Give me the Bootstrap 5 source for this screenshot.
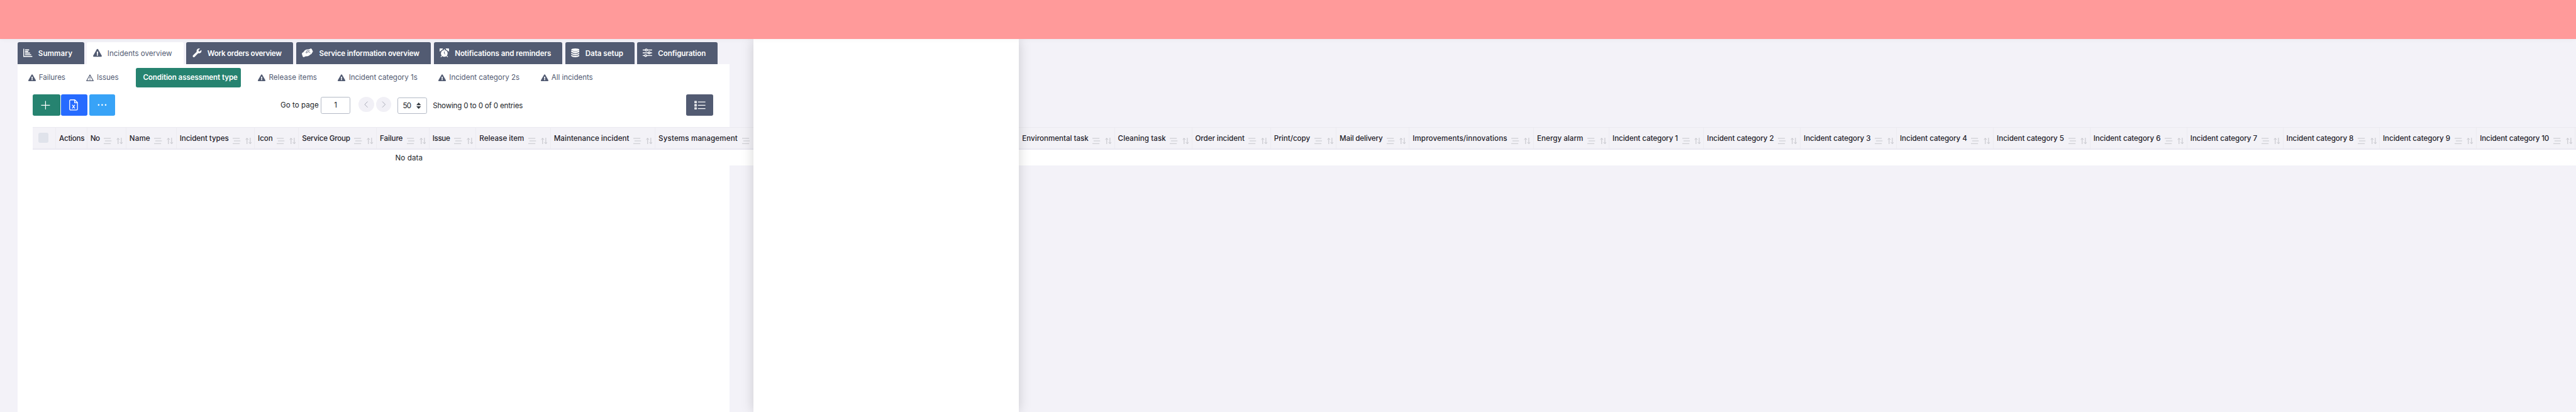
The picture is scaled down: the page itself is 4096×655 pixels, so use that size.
<!DOCTYPE html>
<html lang="en">
<head>
<meta charset="utf-8">
<title>Incidents overview</title>
<link href="https://cdn.jsdelivr.net/npm/bootstrap@5.3.0/dist/css/bootstrap.min.css" rel="stylesheet">
<style>
/* 1rem = 10 layout units */
html{font-size:9.2838px;overflow:hidden;height:100%}
body{font-family:Inter,"Noto Sans",sans-serif;font-size:1.25rem;line-height:1.8rem;color:#212529;background:#f3f2f8;height:100%;overflow:hidden;position:relative}
svg{display:block;flex:none}
.fit{display:inline-block;white-space:nowrap;flex:none}
.topbar{height:6.7rem;background:#ff9a9a;position:relative;z-index:5;box-shadow:0 0 .8rem rgba(0,0,0,.05)}
.tabs{padding:.5rem 0 0 3rem;height:4.3rem}
.tab{height:3.8rem;background:#525b72;color:#fff;font-weight:600;border-radius:.3rem .3rem 0 0;padding:.2rem 0 0 1rem;flex:none;width:calc(var(--w)*.1rem);margin-right:calc(var(--g,5)*.1rem)}
.tab svg{width:calc(var(--i)*.1rem);height:1.5rem;margin:-.3rem 1rem 0 0}
.tab.on{background:#fff;color:#525b72;font-weight:400}
.panel{margin-left:3rem;width:122rem;height:calc(100% - 11rem);background:#fff}
.subs{height:4.6rem;color:#525b72;position:relative;padding-left:1.8rem}
.sub{flex:none;width:calc(var(--w)*.1rem)}
.sub svg{width:1.3rem;height:1.2rem;margin-right:.55rem}
.pill{background:#268370;color:#fff;font-weight:600;width:18.05rem;height:3.4rem;border-radius:.3rem;padding-left:1.25rem;margin-right:2.9rem;flex:none}
.tools{height:6.2rem;padding:.6rem 0 0 2.6rem}
.sq{height:3.6rem;border-radius:.3rem;color:#fff;flex:none;width:calc(var(--w)*.1rem);border:0;padding:0}
.field{border:1px solid #b4bac6;border-radius:.3rem;height:2.85rem;background:#fff;flex:none}
.circ{width:2.6rem;height:2.6rem;border-radius:50%;background:#f1f0f6;flex:none}
.heads{margin-left:2.6rem;width:435.6rem;height:3.87rem;background:#f3f2f7;border-top:1px solid #ebeaf0;border-bottom:2px solid #e9e8f1}
.hd{flex:none;width:calc(var(--w)*.1rem);border-right:1px solid #ecebf1;padding:.1rem 0 0 .53rem;font-weight:450;color:#1e2129}
.hd svg.ln{width:1.35rem;height:1.1rem;margin:.9rem .77rem 0 .72rem}
.hd svg.so{width:1.15rem;height:1.1rem;margin-top:.8rem}
.chk{width:1.8rem;height:1.8rem;border-radius:.3rem;background:#e0e3eb;margin:-.3rem 0 0 .4rem}
.empty{margin-left:2.6rem;width:435.6rem;height:2.65rem;background:#fff;padding:.15rem 0 0 62.1rem}
.drawer{position:absolute;left:129rem;top:6.7rem;width:45.5rem;bottom:0;background:#fff;box-shadow:0 0 2rem rgba(0,0,0,.17);z-index:3}
</style>
</head>
<body>
<svg width="0" height="0" class="position-absolute">
<symbol id="warn" viewBox="0 0 576 512"><path fill="currentColor" d="M569.517 440.013C587.975 472.007 564.806 512 527.94 512H48.054c-36.937 0-59.999-40.055-41.577-71.987L246.423 23.985c18.467-32.009 64.72-31.951 83.154 0l239.94 416.028zM288 354c-25.405 0-46 20.595-46 46s20.595 46 46 46 46-20.595 46-46-20.595-46-46-46zm-43.673-165.346l7.418 136c.347 6.364 5.609 11.346 11.982 11.346h48.546c6.373 0 11.635-4.982 11.982-11.346l7.418-136c.375-6.874-5.098-12.654-11.982-12.654h-63.383c-6.884 0-12.356 5.78-11.981 12.654z"/></symbol>
<symbol id="warno" viewBox="0 0 26 24"><path d="M13 2 24.500 22.500H1.500Z" fill="none" stroke="currentColor" stroke-width="2.4" stroke-linejoin="round"/><path d="M13 9v6M13 17.2v2.6" stroke="currentColor" stroke-width="2.6"/></symbol>
<symbol id="lines" viewBox="0 0 13.5 11"><path d="M0 1h12M2 5.5h11.5M0 10h12" stroke="#c6c6cb" stroke-width="1.1" fill="none"/></symbol>
<symbol id="sort" viewBox="0 0 11.5 11"><path d="M3 11V1M.6 3.2 3 .8 5.4 3.2M8.5 0v10M6.1 7.8l2.4 2.4 2.4-2.4" stroke="#bdbdc3" stroke-width="1" fill="none"/></symbol>
</svg>

<header class="topbar"></header>

<nav class="tabs d-flex">
  <div class="tab d-flex align-items-center" style="--w:114;--i:15.5"><svg viewBox="0 0 31 28"><path d="M1.5 0v26.5H31" fill="none" stroke="#fff" stroke-width="3"/><path d="M6 4h14M6 9.5h11M6 15h17M6 20.5h21" stroke="#fff" stroke-width="3.6"/></svg><span class="fit" data-w="58.5">Summary</span></div>
  <div class="tab on d-flex align-items-center" style="--w:166;--i:15;--g:4.3"><svg><use href="#warn"/></svg><span class="fit" data-w="110.5">Incidents overview</span></div>
  <div class="tab d-flex align-items-center" style="--w:183;--i:16"><svg viewBox="0 0 512 512"><path fill="#fff" d="M507.73 109.1c-2.24-9.03-13.54-12.09-20.12-5.51l-74.36 74.36-67.88-11.31-11.31-67.88 74.36-74.36c6.62-6.62 3.43-17.9-5.66-20.16-47.38-11.74-99.55.91-136.58 37.93-39.64 39.64-50.55 97.1-34.05 147.2L18.74 402.76c-24.99 24.99-24.99 65.51 0 90.5 24.99 24.99 65.51 24.99 90.5 0l213.21-213.21c50.12 16.71 107.47 5.68 147.37-34.22 37.07-37.07 49.7-89.32 37.91-136.73z"/></svg><span class="fit" data-w="127">Work orders overview</span></div>
  <div class="tab d-flex align-items-center" style="--w:230.700;--i:19.5"><svg viewBox="0 0 39 30"><path fill="#fff" d="M1 15 5 13Q9 6 15 4L24 3 31 0 34 2 38 11 35 15Q34 20 29 21L25 24Q20 28 13 27L6 30 3 28 0 19Z"/><path d="M27 8H17L14 15Q18 17 20 12H25L29 16" stroke="#525b72" stroke-width="1.7" fill="none"/></svg><span class="fit" data-w="171.5">Service information overview</span></div>
  <div class="tab d-flex align-items-center" style="--w:220;--i:16"><svg viewBox="0 0 32 30"><circle cx="16" cy="17" r="11.5" fill="#fff"/><path d="M1 9A5 5 0 0 1 10 2ZM31 9A5 5 0 0 0 22 2ZM16 2v5M8 25l-4 4.500M24 25l4 4.500" fill="#fff" stroke="#fff" stroke-width="2.500"/><path d="M16 10.500V17l3.500 3" stroke="#525b72" stroke-width="2" fill="none"/></svg><span class="fit" data-w="165">Notifications and reminders</span></div>
  <div class="tab d-flex align-items-center" style="--w:119;--i:14.5;--g:4"><svg viewBox="0 0 28 30"><ellipse cx="14" cy="4.500" rx="14" ry="4.500" fill="#fff"/><path fill="#fff" d="M0 7Q14 14 28 7V12Q14 20 0 12ZM0 15Q14 22 28 15V19Q14 27 0 19ZM0 22Q14 29 28 22V26Q24 30 14 30T0 26Z"/></svg><span class="fit" data-w="65">Data setup</span></div>
  <div class="tab d-flex align-items-center" style="--w:138;--i:16"><svg viewBox="0 0 32 30"><path d="M0 5.500h32M0 15h32M0 24.500h32" stroke="#fff" stroke-width="3.200"/><g fill="#525b72" stroke="#fff" stroke-width="3"><circle cx="12" cy="5.500" r="3.300"/><circle cx="22" cy="15" r="3.300"/><circle cx="10" cy="24.500" r="3.300"/></g></svg><span class="fit" data-w="82">Configuration</span></div>
</nav>

<main class="panel">
  <div class="subs d-flex align-items-center">
    <div class="sub d-flex align-items-center" style="--w:99.5"><svg><use href="#warn"/></svg><span class="fit" data-w="45.5">Failures</span></div>
    <div class="sub d-flex align-items-center" style="--w:85"><svg><use href="#warno"/></svg><span class="fit" data-w="37">Issues</span></div>
    <div class="pill d-flex align-items-center"><span class="fit" data-w="162">Condition assessment type</span></div>
    <div class="sub d-flex align-items-center" style="--w:137"><svg><use href="#warn"/></svg><span class="fit" data-w="82.500">Release items</span></div>
    <div class="sub d-flex align-items-center" style="--w:172"><svg><use href="#warn"/></svg><span class="fit" data-w="117.500">Incident category 1s</span></div>
    <div class="sub d-flex align-items-center" style="--w:175"><svg><use href="#warn"/></svg><span class="fit" data-w="120.500">Incident category 2s</span></div>
    <div class="sub d-flex align-items-center" style="--w:100"><svg><use href="#warn"/></svg><span class="fit" data-w="71">All incidents</span></div>
  </div>

  <div class="tools d-flex align-items-start">
    <button class="sq d-flex align-items-center justify-content-center" style="--w:47;background:#268370;margin-right:.2rem"><svg style="width:1.6rem;height:1.6rem;margin-right:.3rem" viewBox="0 0 16 16"><path d="M8 .5v15M.5 8h15" stroke="#fff" stroke-width="1.300"/></svg></button>
    <button class="sq d-flex align-items-center justify-content-center" style="--w:45;background:#266bff;margin-right:.3rem"><svg style="width:1.5rem;height:1.9rem;margin-right:.2rem" viewBox="0 0 15 19"><path d="M9.500 .8H2.500A1.700 1.700 0 0 0 .8 2.500V16.500A1.700 1.700 0 0 0 2.500 18.200H12.500A1.700 1.700 0 0 0 14.200 16.500V5.500ZM9.300 .8V5.700H14.200M5.200 9.300 9.800 15.500M9.800 9.300 5.200 15.500" fill="none" stroke="#fff" stroke-width="1.400"/></svg></button>
    <button class="sq d-flex align-items-center justify-content-center" style="--w:44;background:#38a3f7"><svg style="width:1.6rem;height:.4rem" viewBox="0 0 16 4"><g fill="#fff"><circle cx="2" cy="2" r="1.400"/><circle cx="8" cy="2" r="1.400"/><circle cx="14" cy="2" r="1.400"/></g></svg></button>
    <div class="d-flex align-items-center" style="height:3.7rem;margin-left:28.350rem">
      <span class="fit" data-w="65.500">Go to page</span>
      <div class="field d-flex align-items-center justify-content-center" style="width:5.05rem;margin-left:.35rem">1</div>
      <div class="circ d-flex align-items-center justify-content-center" style="margin:-.3rem .4rem 0 1.450rem"><svg style="width:.7rem;height:1.1rem" viewBox="0 0 7 11"><path d="M6 .5 1 5.500l5 5" fill="none" stroke="#a5a8b3"/></svg></div>
      <div class="circ d-flex align-items-center justify-content-center" style="margin:-.3rem 1rem 0 0"><svg style="width:.7rem;height:1.1rem" viewBox="0 0 7 11"><path d="M1 .5l5 5-5 5" fill="none" stroke="#a5a8b3"/></svg></div>
      <div class="field d-flex align-items-center" style="width:5.150rem;margin-top:.1rem;padding-left:.85rem"><span class="fit" data-w="13.500">50</span><svg style="width:.8rem;height:1.1rem;margin-left:1rem" viewBox="0 0 8 11"><path d="M4 0 8 4.500H0ZM4 11 0 6.500H8Z" fill="#343a40"/></svg></div>
      <span class="fit" data-w="154" style="margin:.1rem 0 0 .95rem">Showing 0 to 0 of 0 entries</span>
    </div>
    <button class="sq d-flex align-items-center justify-content-center" style="--w:46.500;background:#525b72;margin-left:28rem"><svg style="width:1.9rem;height:1.6rem" viewBox="0 0 19 16"><path d="M6.200 2.400H19M6.200 8H19M6.200 13.600H19" stroke="#fff" stroke-width="1.300"/><path d="M1 1.200h2.400v2.400H1zM1 6.800h2.400v2.400H1zM1 12.400h2.400v2.400H1z" fill="none" stroke="#fff" stroke-width="1.500"/></svg></button>
  </div>

  <div class="heads d-flex" id="heads"></div>
  <div class="empty d-flex align-items-center"><span class="fit" data-w="47">No data</span></div>
</main>

<aside class="drawer"></aside>

<script src="https://cdn.jsdelivr.net/npm/bootstrap@5.3.0/dist/js/bootstrap.bundle.min.js"></script>
<script>
// Columns: label, column width, label width
const columns = [
  ['No',67,16],['Name',86,35.5],['Incident types',134,84],['Icon',75.5,25.3],['Service Group',133.5,82.5],
  ['Failure',90,39],['Issue',80.5,30],['Release item',127.5,76.5],['Maintenance incident',179.2,129],
  ['Systems management',186.8,135.5],['',436.1,0],['Environmental task',164,113.6],['Cleaning task',132.4,82],
  ['Order incident',135,84.3],['Print/copy',112.3,61.8],['Mail delivery',125,73.6],['Improvements/innovations',213.2,162.2],
  ['Energy alarm',129.3,79],['Incident category 1',161.8,112],['Incident category 2',165.7,114.5],['Incident category 3',164.7,114.5],
  ['Incident category 4',166,115],['Incident category 5',165.4,115],['Incident category 6',166,115],['Incident category 7',164.6,114.5],
  ['Incident category 8',165.2,115],['Incident category 9',166.2,115.3],['Incident category 10',169.1,118.5]
];
const cell = (w, html) => `<div class="hd d-flex align-items-center" style="--w:${w}">${html}</div>`;
document.getElementById('heads').innerHTML =
  cell(40, '<div class="chk"></div>') +
  cell(53.5, '<span class="fit" data-w="43.5">Actions</span>') +
  columns.map(([t, w, tw]) => cell(w, t ? `<span class="fit" data-w="${tw}">${t}</span><svg class="ln"><use href="#lines"/></svg><svg class="so"><use href="#sort"/></svg>` : '')).join('');

// Track each label so it fills its assigned width
const unit = parseFloat(getComputedStyle(document.documentElement).fontSize) / 10;
document.querySelectorAll('[data-w]').forEach(el => {
  const target = el.dataset.w * unit;
  const n = el.textContent.length;
  const now = el.getBoundingClientRect().width;
  el.style.letterSpacing = ((target - now) / n).toFixed(3) + 'px';
  el.style.width = target.toFixed(2) + 'px';
});
</script>
</body>
</html>
